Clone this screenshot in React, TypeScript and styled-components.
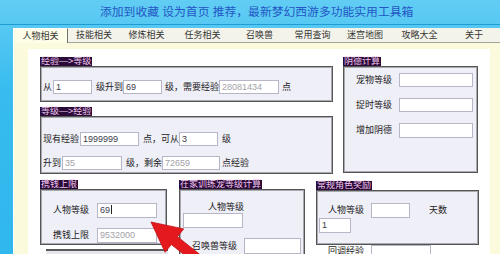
import React from 'react';
import styled, { createGlobalStyle } from 'styled-components';

const GlobalStyle = createGlobalStyle`
  html, body {
    margin: 0;
    padding: 0;
  }
  body {
    font-family: "Liberation Sans", "Noto Sans CJK SC", sans-serif;
  }
`;

const Page = styled.div`
  position: relative;
  width: 500px;
  height: 254px;
  overflow: hidden;
  background: linear-gradient(180deg, #62cdf4 0%, #38bcef 35%, #30b7ec 100%);
`;

const TitleBar = styled.div`
  box-sizing: border-box;
  height: 25px;
  line-height: 25px;
  padding-left: 100px;
  font-size: 11.8px;
  color: #2356c4;
  white-space: nowrap;
  border-bottom: 1px solid #1e9cd4;
`;

const Window = styled.div`
  margin: 3px 0 0 13px;
  width: 500px;
  height: 240px;
  background: #fcfadc;
  border-left: 1px solid #ffffff;
`;

const TabBar = styled.div`
  box-sizing: border-box;
  display: flex;
  height: 15px;
  background: #f3f3ea;
  border-bottom: 1px solid #a4a49c;
`;

const Tab = styled.div<{ $w: number; $active?: boolean }>`
  box-sizing: border-box;
  flex: 0 0 ${p => p.$w}px;
  height: ${p => (p.$active ? 15 : 14)}px;
  line-height: 14px;
  text-align: center;
  font-size: 9px;
  color: #333;
  white-space: nowrap;
  ${p =>
    p.$active
      ? `
    background: #fefee8;
    border-top: 1px solid #ffffff;
    border-right: 1px solid #707070;
    position: relative;
    z-index: 1;
  `
      : ''}
`;

const TabBody = styled.div`
  padding: 6px 0 0 14px;
`;

const Panel = styled.div`
  box-sizing: border-box;
  width: 462px;
  height: 220px;
  padding: 8px 0 0 12px;
  background: #ffffff;
`;

const Split = styled.div<{ $gap: number; $mt?: number }>`
  display: flex;
  align-items: flex-start;
  gap: ${p => p.$gap}px;
  margin-top: ${p => p.$mt ?? 0}px;
`;

const Column = styled.div<{ $mt?: number }>`
  display: flex;
  flex-direction: column;
  align-items: flex-start;
  margin-top: ${p => p.$mt ?? 0}px;
`;

const Legend = styled.div<{ $mt?: number }>`
  height: 9px;
  line-height: 9px;
  margin-top: ${p => p.$mt ?? 0}px;
  padding: 0 1px;
  font-size: 9px;
  color: #f0c6ee;
  background: #2a0b38;
  white-space: nowrap;
`;

const Box = styled.div<{ $w: number; $h: number }>`
  box-sizing: border-box;
  width: ${p => p.$w}px;
  height: ${p => p.$h}px;
  background: #efeff8;
  border: 1px solid #555;
  box-shadow: inset 0 0 0 1px #a9a9b0;
  display: flex;
  flex-direction: column;
  align-items: flex-start;
`;

const Stub = styled.div`
  width: 122px;
  height: 12px;
  margin: 4px 0 0 6px;
  border-top: 2px solid #5a5a5a;
  background: #e6e6ee;
`;

const Row = styled.div<{ $pl?: number; $pt?: number }>`
  display: flex;
  align-items: center;
  padding-left: ${p => p.$pl ?? 0}px;
  margin-top: ${p => p.$pt ?? 0}px;
`;

const Label = styled.span<{ $ml?: number; $mt?: number }>`
  font-size: 9px;
  line-height: 9px;
  color: #222;
  white-space: nowrap;
  margin-left: ${p => p.$ml ?? 0}px;
  margin-top: ${p => p.$mt ?? 0}px;
`;

const Field = styled.div<{ $w: number; $h?: number; $ml?: number; $mt?: number; $muted?: boolean }>`
  box-sizing: border-box;
  flex: 0 0 auto;
  width: ${p => p.$w}px;
  height: ${p => p.$h ?? 14}px;
  margin-left: ${p => p.$ml ?? 0}px;
  margin-top: ${p => p.$mt ?? 0}px;
  padding-left: 2px;
  border: 1px solid #b6b6c6;
  background: #fff;
  font-size: 9px;
  line-height: ${p => (p.$h ?? 14) - 2}px;
  color: ${p => (p.$muted ? '#a2a2a8' : '#3c3c4c')};
  white-space: nowrap;
  overflow: hidden;
`;

const Caret = styled.span`
  display: inline-block;
  width: 1px;
  height: 9px;
  margin-left: 1px;
  vertical-align: -1px;
  background: #222;
`;

const Overlay = styled.svg`
  position: absolute;
  left: 0;
  top: 0;
  pointer-events: none;
`;

const tabs: [string, number][] = [
  ['人物相关', 54],
  ['技能相关', 52],
  ['修炼相关', 53],
  ['任务相关', 59],
  ['召唤兽', 55],
  ['常用查询', 51],
  ['迷宫地图', 54],
  ['攻略大全', 55],
  ['关于', 54],
];

function App() {
  return (
    <Page>
      <GlobalStyle />
      <TitleBar>添加到收藏&nbsp;设为首页&nbsp;推荐，最新梦幻西游多功能实用工具箱</TitleBar>
      <Window>
        <TabBar>
          {tabs.map(([name, w], i) => (
            <Tab key={name} $w={w} $active={i === 0}>
              {name}
            </Tab>
          ))}
        </TabBar>
        <TabBody>
          <Panel>
            <Split $gap={10}>
              <Column>
                <Legend>经验—&gt;等级</Legend>
                <Box $w={293} $h={36}>
                  <Row $pl={2} $pt={13}>
                    <Label>从</Label>
                    <Field $w={39} $ml={1}>1</Field>
                    <Label $ml={4}>级升到</Label>
                    <Field $w={39}>69</Field>
                    <Label $ml={3}>级，需要经验</Label>
                    <Field $w={60} $muted>28081434</Field>
                    <Label $ml={3}>点</Label>
                  </Row>
                </Box>
                <Legend $mt={5}>等级—&gt;经验</Legend>
                <Box $w={293} $h={58}>
                  <Row $pl={2} $pt={15}>
                    <Label>现有经验</Label>
                    <Field $w={59} $ml={1}>1999999</Field>
                    <Label $ml={4}>点，可从</Label>
                    <Field $w={39}>3</Field>
                    <Label $ml={4}>级</Label>
                  </Row>
                  <Row $pl={2} $pt={10}>
                    <Label>升到</Label>
                    <Field $w={60} $ml={1} $muted>35</Field>
                    <Label $ml={4}>级，剩余</Label>
                    <Field $w={58} $muted>72659</Field>
                    <Label $ml={2}>点经验</Label>
                  </Row>
                </Box>
              </Column>
              <Column>
                <Legend>阴德计算</Legend>
                <Box $w={135} $h={107}>
                  <Row $pl={12} $pt={6}>
                    <Label>宠物等级</Label>
                    <Field $w={74} $ml={7} />
                  </Row>
                  <Row $pl={12} $pt={11}>
                    <Label>捉时等级</Label>
                    <Field $w={74} $ml={7} />
                  </Row>
                  <Row $pl={12} $pt={11}>
                    <Label>增加阴德</Label>
                    <Field $w={74} $ml={7} $h={15} />
                  </Row>
                </Box>
              </Column>
            </Split>

            <Split $gap={11} $mt={6}>
              <Column>
                <Legend>携钱上限</Legend>
                <Box $w={127} $h={56}>
                  <Row $pl={12} $pt={13}>
                    <Label>人物等级</Label>
                    <Field $w={60} $h={15} $ml={8}>
                      69<Caret />
                    </Field>
                  </Row>
                  <Row $pl={12} $pt={10}>
                    <Label>携钱上限</Label>
                    <Field $w={60} $h={15} $ml={8} $muted>9532000</Field>
                  </Row>
                </Box>
                <Stub />
              </Column>
              <Column>
                <Legend>在家训练宠等级计算</Legend>
                <Box $w={126} $h={80}>
                  <Label $ml={28} $mt={13}>人物等级</Label>
                  <Field $w={60} $h={15} $ml={3} $mt={1} />
                  <Row $pl={12} $pt={10}>
                    <Label>召唤兽等级</Label>
                    <Field $w={57} $h={16} $ml={7} />
                  </Row>
                </Box>
              </Column>
              <Column $mt={1}>
                <Legend>常规角色奖励</Legend>
                <Box $w={163} $h={55}>
                  <Row $pl={11} $pt={12}>
                    <Label>人物等级</Label>
                    <Field $w={39} $h={15} $ml={7} />
                    <Label $ml={19}>天数</Label>
                  </Row>
                  <Field $w={32} $h={15} $ml={2}>1</Field>
                </Box>
                <Row $pl={12}>
                  <Label>回调经验</Label>
                  <Field $w={60} $h={12} $ml={7} />
                </Row>
              </Column>
            </Split>
          </Panel>
        </TabBody>
      </Window>
      <Overlay width="500" height="254" viewBox="0 0 500 254">
        <polygon
          points="151,222 183.7,228.9 177.5,236.7 208.7,261.5 202.5,269.3 171.3,244.5 165.1,252.3"
          fill="#e3191e"
          stroke="#c40f14"
          strokeWidth="0.8"
          strokeLinejoin="round"
        />
      </Overlay>
    </Page>
  );
}

export default App;
